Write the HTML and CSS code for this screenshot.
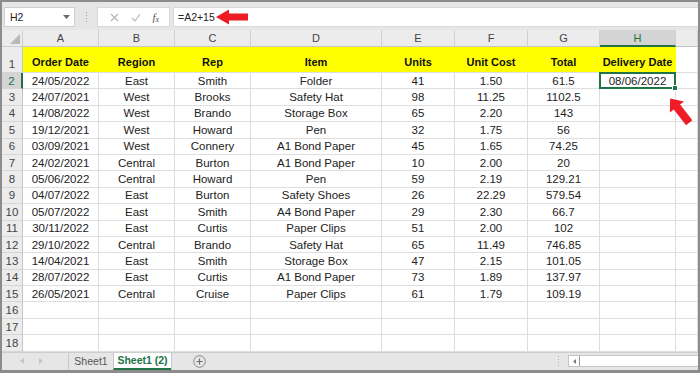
FILE: index.html
```html
<!DOCTYPE html>
<html lang="en">
<head>
  <meta charset="UTF-8">
  <meta name="viewport" content="width=device-width, initial-scale=1.0">
  <title>Delivery Dates</title>
  <link rel="stylesheet" href="styles.css">
</head>
<body>
  <div class="window">
    <div class="formula-bar">
      <div class="name-box">
        <span>H2</span>
        <svg class="caret" width="7" height="4" viewBox="0 0 7 4"><polygon points="0,0 7,0 3.5,4" fill="#6a6a6a"/></svg>
      </div>
      <svg class="grip" width="3" height="11" viewBox="0 0 3 11">
        <rect x="1" y="0" width="1" height="1" fill="#9a9a9a"/>
        <rect x="1" y="3" width="1" height="1" fill="#9a9a9a"/>
        <rect x="1" y="6" width="1" height="1" fill="#9a9a9a"/>
        <rect x="1" y="9" width="1" height="1" fill="#9a9a9a"/>
      </svg>
      <div class="fx-buttons">
        <svg width="9" height="9" viewBox="0 0 9 9"><path d="M1 1 L8 8 M8 1 L1 8" stroke="#b4b4b4" stroke-width="1.1"/></svg>
        <svg width="10" height="9" viewBox="0 0 10 9"><path d="M1 5 L4 8 L9 1" stroke="#b4b4b4" stroke-width="1.1" fill="none"/></svg>
        <span class="fx">f<span class="fx-sub">x</span></span>
      </div>
      <div class="formula-input">=A2+15</div>
    </div>

    <div class="sheet" id="sheet">
      <!-- cells are built by the script below -->
    </div>

    <div class="tab-bar">
      <div class="tab-nav">
        <svg width="4" height="6" viewBox="0 0 4 6"><polygon points="4,0 4,6 0,3" fill="#c4c4c4"/></svg>
        <svg width="4" height="6" viewBox="0 0 4 6"><polygon points="0,0 0,6 4,3" fill="#c4c4c4"/></svg>
      </div>
      <div class="tab">Sheet1</div>
      <div class="tab active">Sheet1 (2)</div>
      <div class="add-sheet">
        <svg width="13" height="13" viewBox="0 0 13 13">
          <circle cx="6.5" cy="6.5" r="5.8" fill="none" stroke="#8a8a8a" stroke-width="1"/>
          <path d="M6.5 3.5 V9.5 M3.5 6.5 H9.5" stroke="#6a6a6a" stroke-width="1.1"/>
        </svg>
      </div>
      <div class="spacer"></div>
      <svg class="grip" width="3" height="11" viewBox="0 0 3 11">
        <rect x="1" y="0" width="1" height="1" fill="#b0b0b0"/>
        <rect x="1" y="3" width="1" height="1" fill="#b0b0b0"/>
        <rect x="1" y="6" width="1" height="1" fill="#b0b0b0"/>
        <rect x="1" y="9" width="1" height="1" fill="#b0b0b0"/>
      </svg>
      <div class="hscroll">
        <div class="hscroll-btn">
          <svg width="3" height="5" viewBox="0 0 3 5"><polygon points="3,0 3,5 0,2.5" fill="#7a7a7a"/></svg>
        </div>
      </div>
    </div>

    <svg class="arrow arrow-formula" width="34" height="18" viewBox="0 0 34 18">
      <polygon points="1,9 14,1.5 14,5.5 33,5.5 33,12.5 14,12.5 14,16.5" fill="#ee1c25"/>
    </svg>
    <svg class="arrow arrow-cell" width="32" height="34" viewBox="0 0 32 34">
      <polygon points="16,1 25,12 20,12 20,32 12,32 12,12 7,12" fill="#ee1c25" transform="rotate(-38 16 17)"/>
    </svg>
  </div>

  <script>
    document.addEventListener('DOMContentLoaded', function() {
      const sheet = document.getElementById('sheet');
      const columns = ['A', 'B', 'C', 'D', 'E', 'F', 'G', 'H', ''];

      // Sample rows, first one is the yellow header
      const rows = [
        ['Order Date', 'Region', 'Rep', 'Item', 'Units', 'Unit Cost', 'Total', 'Delivery Date'],
        ['24/05/2022', 'East', 'Smith', 'Folder', '41', '1.50', '61.5', '08/06/2022'],
        ['24/07/2021', 'West', 'Brooks', 'Safety Hat', '98', '11.25', '1102.5', ''],
        ['14/08/2022', 'West', 'Brando', 'Storage Box', '65', '2.20', '143', ''],
        ['19/12/2021', 'West', 'Howard', 'Pen', '32', '1.75', '56', ''],
        ['03/09/2021', 'West', 'Connery', 'A1 Bond Paper', '45', '1.65', '74.25', ''],
        ['24/02/2021', 'Central', 'Burton', 'A1 Bond Paper', '10', '2.00', '20', ''],
        ['05/06/2022', 'Central', 'Howard', 'Pen', '59', '2.19', '129.21', ''],
        ['04/07/2022', 'East', 'Burton', 'Safety Shoes', '26', '22.29', '579.54', ''],
        ['05/07/2022', 'East', 'Smith', 'A4 Bond Paper', '29', '2.30', '66.7', ''],
        ['30/11/2022', 'East', 'Curtis', 'Paper Clips', '51', '2.00', '102', ''],
        ['29/10/2022', 'Central', 'Brando', 'Safety Hat', '65', '11.49', '746.85', ''],
        ['14/04/2021', 'East', 'Smith', 'Storage Box', '47', '2.15', '101.05', ''],
        ['28/07/2022', 'East', 'Curtis', 'A1 Bond Paper', '73', '1.89', '137.97', ''],
        ['26/05/2021', 'Central', 'Cruise', 'Paper Clips', '61', '1.79', '109.19', ''],
        [], [], []
      ];

      function addCell(className, text) {
        const div = document.createElement('div');
        div.className = className;
        div.textContent = text || '';
        sheet.appendChild(div);
        return div;
      }

      // Column headers
      const corner = addCell('corner', '');
      corner.innerHTML = '<svg width="10" height="10" viewBox="0 0 10 10"><polygon points="10,0 10,10 0,10" fill="#b8b8b8"/></svg>';
      columns.forEach(col => {
        addCell(col === 'H' ? 'col-head sel' : 'col-head', col);
      });

      // Rows
      rows.forEach((row, r) => {
        const num = r + 1;
        let headClass = 'row-head';
        if (num === 1) headClass += ' first';
        if (num === 2) headClass += ' sel';
        addCell(headClass, num);
        columns.forEach((col, c) => {
          let cls = 'cell';
          if (num === 1 && col) cls += ' title';
          if (num === 2 && col === 'H') cls += ' active';
          addCell(cls, row[c]);
        });
      });
    });
  </script>
</body>
</html>
```

FILE: styles.css
```css
body {
  margin: 0;
  padding: 0;
  font-family: "Liberation Sans", Arial, sans-serif;
  font-size: 11px;
  color: #222;
}

.window {
  position: relative;
  width: 700px;
  height: 373px;
  box-sizing: border-box;
  border: 2px solid #8c8c8c;
  border-bottom-width: 3px;
  background: #e6e6e6;
  display: flex;
  flex-direction: column;
  overflow: hidden;
}

/* formula bar */
.formula-bar {
  height: 28px;
  box-sizing: border-box;
  padding: 5px 0 3px 2px;
  display: flex;
  align-items: stretch;
  flex: none;
}

.name-box {
  width: 71px;
  box-sizing: border-box;
  background: #fff;
  border: 1px solid #cfcfcf;
  display: flex;
  align-items: center;
  justify-content: space-between;
  padding: 0 4px 0 5px;
  font-size: 10.5px;
}

.formula-bar .grip {
  align-self: center;
  margin: 0 9px 0 10px;
}

.fx-buttons {
  width: 73px;
  box-sizing: border-box;
  background: #fff;
  border: 1px solid #dadada;
  display: flex;
  align-items: center;
  justify-content: space-around;
  padding: 0 4px 0 6px;
}

.fx {
  font-family: "Liberation Serif", serif;
  font-style: italic;
  font-size: 11px;
  color: #555;
}

.fx-sub {
  font-size: 8px;
  vertical-align: -1px;
}

.formula-input {
  flex: 1;
  margin-left: 3px;
  background: #fff;
  border: 1px solid #dadada;
  border-right: none;
  display: flex;
  align-items: center;
  padding-left: 4px;
  font-size: 10.5px;
}

/* sheet grid */
.sheet {
  flex: none;
  display: grid;
  grid-template-columns: 21px 76px 76px 76px 131px 73px 73px 72px 76px 1fr;
  grid-template-rows: 17px 26px repeat(17, 16.4px);
  background: #fff;
}

.sheet > div {
  box-sizing: border-box;
  display: flex;
  align-items: center;
  justify-content: center;
  white-space: nowrap;
  overflow: hidden;
}

.corner {
  background: #ececec;
  border-right: 1px solid #cfcfcf;
  border-bottom: 1px solid #cfcfcf;
  align-items: flex-end !important;
  justify-content: flex-end !important;
  padding: 0 2px 2px 0;
}

.col-head {
  background: #ececec;
  color: #444;
  border-right: 1px solid #d0d0d0;
  border-bottom: 1px solid #c6c6c6;
  font-size: 11px;
}

.col-head.sel {
  background: #d4d4d4;
  color: #217346;
  border-bottom: 2px solid #217346;
}

.row-head {
  background: #ececec;
  color: #444;
  border-right: 1px solid #c6c6c6;
  border-bottom: 1px solid #d6d6d6;
  font-size: 11.5px;
}

.row-head.first {
  align-items: flex-end !important;
  padding-bottom: 2px;
}

.row-head.sel {
  background: #d4d4d4;
  color: #217346;
  border-right: 2px solid #217346;
}

.cell {
  border-right: 1px solid #dedede;
  border-bottom: 1px solid #dedede;
  font-size: 11.5px;
  color: #222;
}

.cell.title {
  background: #ffff00;
  border-right-color: #ffff00;
  font-weight: bold;
  font-size: 11px;
  align-items: flex-end !important;
  padding-bottom: 4px;
  color: #111;
}

.cell.active {
  position: relative;
  overflow: visible !important;
  border: 2px solid #217346;
  margin: -1px 0 0 -1px;
}

.cell.active::after {
  content: "";
  position: absolute;
  right: -4px;
  bottom: -4px;
  width: 4px;
  height: 4px;
  background: #217346;
  border: 1px solid #fff;
}

/* sheet tabs */
.tab-bar {
  flex: 1;
  display: flex;
  align-items: stretch;
  border-top: 1px solid #cdcdcd;
  background: #e6e6e6;
  font-size: 10.5px;
}

.tab-nav {
  width: 66px;
  display: flex;
  align-items: center;
  gap: 15px;
  padding-left: 18px;
  box-sizing: border-box;
}

.tab {
  width: 44px;
  border-left: 1px solid #c8c8c8;
  display: flex;
  align-items: center;
  justify-content: center;
  color: #555;
}

.tab.active {
  width: 58px;
  background: #fff;
  color: #217346;
  font-weight: bold;
  border-bottom: 2px solid #217346;
  box-sizing: border-box;
}

.add-sheet {
  width: 54px;
  border-left: 1px solid #c8c8c8;
  display: flex;
  align-items: center;
  justify-content: center;
}

.spacer {
  flex: 1;
}

.tab-bar .grip {
  align-self: center;
  margin-right: 8px;
}

.hscroll {
  width: 130px;
  align-self: center;
  height: 12px;
  box-sizing: border-box;
  background: #fff;
  border: 1px solid #c6c6c6;
  border-right: none;
  display: flex;
}

.hscroll-btn {
  width: 10px;
  border-right: 1px solid #9a9a9a;
  display: flex;
  align-items: center;
  justify-content: center;
}

/* red call-out arrows */
.arrow {
  position: absolute;
}

.arrow-formula {
  left: 213px;
  top: 6px;
}

.arrow-cell {
  left: 662px;
  top: 92px;
}
```
